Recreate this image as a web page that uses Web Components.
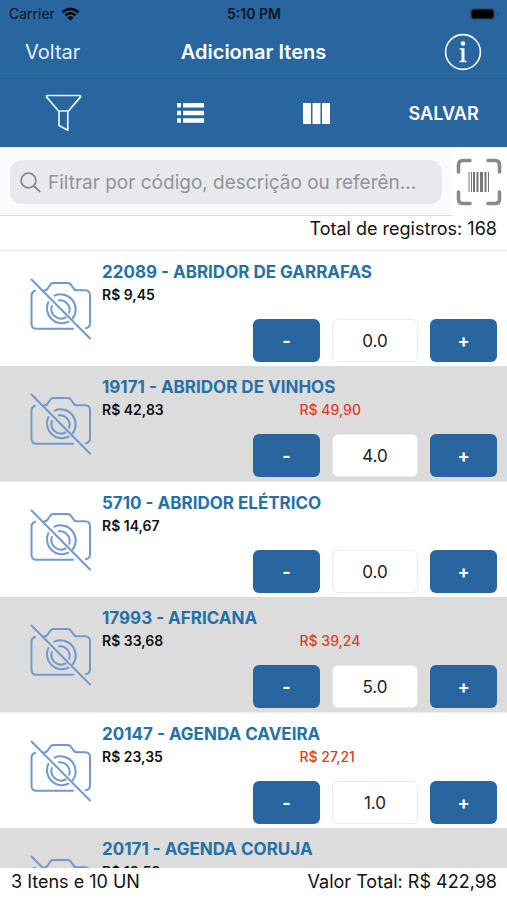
<!DOCTYPE html>
<html lang="pt-BR">
<head>
<meta charset="utf-8">
<meta name="viewport" content="width=device-width, initial-scale=1">
<title>Adicionar Itens</title>
<style>
  html, body { margin: 0; height: 100%; }
  body { font-family: Inter, "Liberation Sans", sans-serif; background: #fff; color: #111; overflow: hidden;
    --blue: #29659e; }
</style>
</head>
<body>
<order-page></order-page>

<script>
const define = (name, html, setup) => customElements.define(name, class extends HTMLElement {
  constructor() {
    super();
    const t = document.createElement('template');
    t.innerHTML = html;
    this.attachShadow({ mode: 'open' }).append(t.content.cloneNode(true));
  }
  connectedCallback() { if (setup) setup(this, this.shadowRoot); }
});

define('status-bar', `
<style>
  :host { display: grid; grid-template-columns: 1fr auto 1fr; align-items: center; height: 26px; padding: 1px 8px 0 9px; box-sizing: border-box; color: #0a1624; font-size: 14px; }
  .net { display: flex; align-items: center; gap: 6px; }
  b { font-weight: 600; }
  .bat { justify-self: end; }
  svg { display: block; }
</style>
<span class="net">Carrier
  <svg width="19" height="14" viewBox="0 0 20 14" fill="none" stroke="#000" stroke-width="2.6"><path d="M1.6 5.2C6.2.6 13.8.6 18.4 5.2M4.7 8.4c3-2.8 7.6-2.8 10.6 0"/><path d="M10 13.8 6.7 10.6c1.9-1.6 4.7-1.6 6.6 0z" fill="#000" stroke="none"/></svg>
</span>
<b>5:10 PM</b>
<svg class="bat" width="30" height="14" viewBox="0 0 30 14"><rect x=".5" y=".5" width="26" height="13" rx="4" fill="#235587" stroke="#3c5f80"/><rect x="2.500" y="2.500" width="22" height="9" rx="2.500" fill="#000"/><path d="M28 5v4c2-1 2-3 0-4z" fill="#234c76"/></svg>
`);

define('nav-bar', `
<style>
  :host { display: grid; grid-template-columns: 1fr auto 1fr; align-items: center; height: 53px; padding: 0 25px; color: #fff; font-size: 20px; box-sizing: border-box; border-bottom: 1px solid #265b91; }
  button { font: inherit; color: #e3f0fc; background: none; border: 0; padding: 0; justify-self: start; }
  h1 { font-size: 20px; font-weight: 600; margin: 0; }
  .info { justify-self: end; }
  svg { display: block; }
</style>
<button>Voltar</button>
<h1>Adicionar Itens</h1>
<button class="info" aria-label="Informações">
  <svg width="38" height="38" viewBox="0 0 38 38"><circle cx="19" cy="19" r="17.400" fill="none" stroke="#fff" stroke-width="1.600"/><circle cx="19" cy="10.500" r="2.300" fill="#fff"/><path d="M15.500 15.200h5v12.200l2 .5v1.300h-7v-1.300l2-.5V17l-2-.5z" fill="#fff"/></svg>
</button>
`);

define('tool-bar', `
<style>
  :host { display: grid; grid-template-columns: repeat(4, 1fr); align-items: center; height: 68px; }
  button { font: inherit; font-size: 18px; font-weight: 600; color: #fff; background: none; border: 0; padding: 0; display: flex; justify-content: center; }
  svg { display: block; }
</style>
<button aria-label="Filtro"><svg width="38" height="38" viewBox="0 0 38 38" fill="none" stroke="#e3f4ff" stroke-width="1.700" stroke-linejoin="round"><path d="M3.500 1.500h32q1.500 0 .8 1.600L24.500 17h-10L2.700 3.100q-.7-1.600.8-1.600zM15 17v14.500l8.800 4.700V17"/></svg></button>
<button aria-label="Lista"><svg width="27" height="20" viewBox="0 0 27 20" fill="#fff"><path d="M0 0h4v4.500H0zM6 0h21v4.500H6zM0 7.700h4v4.500H0zM6 7.700h21v4.500H6zM0 15.300h4v4.500H0zM6 15.300h21v4.500H6z"/></svg></button>
<button aria-label="Colunas"><svg width="27" height="21" viewBox="0 0 27 21" fill="#fff"><path d="M0 0h8v21H0zM9.500 0h8v21h-8zM19 0h8v21h-8z"/></svg></button>
<button>SALVAR</button>
`);

define('search-bar', `
<style>
  :host { display: flex; height: 69px; }
  .wrap { flex: 1; min-width: 0; box-sizing: border-box; background: #f9fbfd; border-bottom: 1px solid #dcdcde; padding: 13px 10px 11px; }
  label { display: flex; align-items: center; gap: 7px; height: 44px; border-radius: 12px; background: #e8e9ec; padding: 0 10px; }
  input { flex: 1; min-width: 0; font: inherit; font-size: 19px; background: none; border: 0; padding: 0; outline: 0; text-overflow: ellipsis; }
  input::placeholder { color: #929397; opacity: 1; }
  button { width: 55px; border: 0; padding: 0 2px 0 0; background: none; display: flex; justify-content: center; align-items: center; }
  svg { display: block; flex: none; }
</style>
<div class="wrap"><label>
  <svg width="21" height="21" viewBox="0 0 21 21" fill="none" stroke="#87888c" stroke-width="1.800" stroke-linecap="round"><circle cx="8.500" cy="8.500" r="7.400"/><path d="m14 14 5.700 5.500"/></svg>
  <input type="text" aria-label="Filtrar" placeholder="Filtrar por código, descrição ou referên...">
</label></div>
<button aria-label="Ler código de barras">
  <svg width="46" height="48" viewBox="0 0 46 48"><path d="M2.500 14V7q0-4.500 4.500-4.500h7M32 2.500h7q4.500 0 4.500 4.500v7M43.500 34v7q0 4.500-4.500 4.500h-7M14 45.500H7Q2.500 45.500 2.500 41v-7" fill="none" stroke="#8a8a8a" stroke-width="3.600" stroke-linecap="round"/><path d="M12.500 14h1v20h-1zM15 14h1v20h-1zM17 14h2v20h-2zM20.500 14h2v20h-2zM24 14h3v20h-3zM28.500 14h2v20h-2zM32 14h1v20h-1z" fill="#777"/></svg>
</button>
`);

define('no-photo', `
<style>:host { display: block; } svg { display: block; }</style>
<svg width="62" height="62" viewBox="0 0 62 62" fill="none" stroke="#7299cd" stroke-width="2" stroke-linecap="round" stroke-linejoin="round"><path d="M1.500 1.500 60 60.500M14.500 12.200q2.500 0 3.500-2.200l2-3q1.200-2 3.500-2h14q2.500 0 3.700 2l2 3q1 2.200 3.500 2.200h8.300q5 0 5 5v28q0 4.300-4.200 5M43 50.800H6.500q-5 0-5-5V17.500q0-3.500 3.500-4.800M24.500 17.700a15 15 0 0 1 18.300 22.500M38.500 43.700A15 15 0 0 1 18.300 24M29 22.300a9.700 9.700 0 0 1 10.200 12.500M35.500 39.500A9.700 9.700 0 0 1 21.800 28"/></svg>
`);

define('quantity-stepper', `
<style>
  :host { display: flex; gap: 12px; height: 43px; }
  button { width: 67px; border: 0; border-radius: 6px; background: var(--blue); color: #fff; font: inherit; font-size: 18px; font-weight: 700; padding: 0; }
  input { width: 86px; box-sizing: border-box; border: 1px solid #ebebeb; border-radius: 6px; background: #fff; text-align: center; font: inherit; font-size: 17px; color: #222; padding: 0; }
</style>
<button aria-label="Diminuir">-</button>
<input type="text" aria-label="Quantidade">
<button aria-label="Aumentar">+</button>
`, (host, root) => { root.querySelector('input').value = host.getAttribute('value'); });

define('product-row', `
<style>
  :host { display: grid; grid-template-columns: 62px 1fr; column-gap: 10px; height: 115px; box-sizing: border-box; padding: 10px 10px 5px 30px; }
  :host(:nth-child(even)) { height: 116px; background: #dcdcdc; border-bottom: 1px solid #ececec; }
  no-photo { margin-top: 17px; }
  .body { display: flex; flex-direction: column; }
  h2 { margin: 0; font-size: 17px; line-height: 22px; font-weight: 700; color: #2472a5; white-space: nowrap; }
  .prices { display: grid; grid-template-columns: 1fr 1fr; font-size: 14px; line-height: 24px; font-weight: 600; }
  .new { color: #dd3d2a; font-weight: 500; }
  quantity-stepper { align-self: flex-end; margin-top: 12px; }
</style>
<no-photo></no-photo>
<div class="body">
  <h2><slot></slot></h2>
  <div class="prices"><span><slot name="price"></slot></span><span class="new"><slot name="new"></slot></span></div>
  <quantity-stepper></quantity-stepper>
</div>
`, (host, root) => { root.querySelector('quantity-stepper').setAttribute('value', host.getAttribute('quantity'));
  root.querySelector('quantity-stepper').shadowRoot.querySelector('input').value = host.getAttribute('quantity'); });

define('total-bar', `
<style>
  :host { display: flex; justify-content: space-between; align-items: flex-start; height: 32px; padding: 2px 10px 0 11px; box-sizing: border-box; background: #fff; font-size: 18px; line-height: 24px; }
</style>
<slot></slot>
`);

define('order-page', `
<style>
  :host { display: flex; flex-direction: column; height: 100vh; }
  header { background: var(--blue); }
  .count { height: 35px; box-sizing: border-box; padding: 0 10px; text-align: right; font-size: 18px; line-height: 26px; border-bottom: 1px solid #ececec; }
  main { flex: 1; min-height: 0; overflow-y: auto; scrollbar-width: none; }
</style>
<header><status-bar></status-bar><nav-bar></nav-bar><tool-bar></tool-bar></header>
<search-bar></search-bar>
<div class="count">Total de registros: 168</div>
<main>
  <product-row quantity="0.0">22089 - ABRIDOR DE GARRAFAS<span slot="price">R$ 9,45</span></product-row>
  <product-row quantity="4.0">19171 - ABRIDOR DE VINHOS<span slot="price">R$ 42,83</span><span slot="new">R$ 49,90</span></product-row>
  <product-row quantity="0.0">5710 - ABRIDOR ELÉTRICO<span slot="price">R$ 14,67</span></product-row>
  <product-row quantity="5.0">17993 - AFRICANA<span slot="price">R$ 33,68</span><span slot="new">R$ 39,24</span></product-row>
  <product-row quantity="1.0">20147 - AGENDA CAVEIRA<span slot="price">R$ 23,35</span><span slot="new">R$ 27,21</span></product-row>
  <product-row quantity="0.0">20171 - AGENDA CORUJA<span slot="price">R$ 18,59</span></product-row>
</main>
<total-bar><span>3 Itens e 10 UN</span><span>Valor Total: R$ 422,98</span></total-bar>
`);
</script>
</body>
</html>
